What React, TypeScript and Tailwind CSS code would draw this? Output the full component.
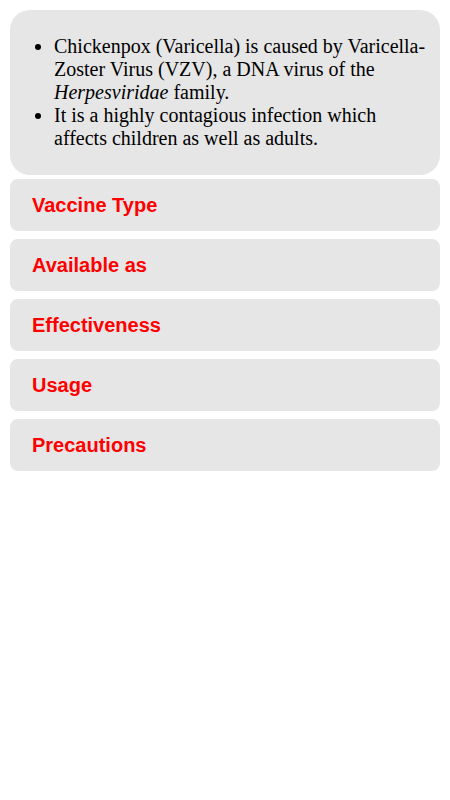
import React from "react";

const items = ["Vaccine Type", "Available as", "Effectiveness", "Usage", "Precautions"];

export default function App() {
  return (
    <div className="w-[450px] h-[800px] bg-white px-[10px] pt-[10px] flex flex-col gap-[8px]">
      <div className="bg-[#e6e6e6] rounded-[20px] pl-[4px] pr-[12px] py-[5px] h-[165px] mb-[-4px]">
        <ul
          className="list-disc pl-[40px] my-[20px] text-[20px] leading-[23px] text-black"
          style={{ fontFamily: '"Liberation Serif", serif' }}
        >
          <li>
            Chickenpox (Varicella) is caused by Varicella-Zoster Virus (VZV), a DNA virus of the{" "}
            <i>Herpesviridae</i> family.
          </li>
          <li>It is a highly contagious infection which affects children as well as adults.</li>
        </ul>
      </div>
      {items.map((t) => (
        <div
          key={t}
          className="bg-[#e6e6e6] rounded-[8px] h-[52px] flex items-center pl-[22px]"
        >
          <span
            className="text-[#ff0000] font-bold text-[20px]"
            style={{ fontFamily: '"Liberation Sans", Arial, sans-serif' }}
          >
            {t}
          </span>
        </div>
      ))}
    </div>
  );
}
